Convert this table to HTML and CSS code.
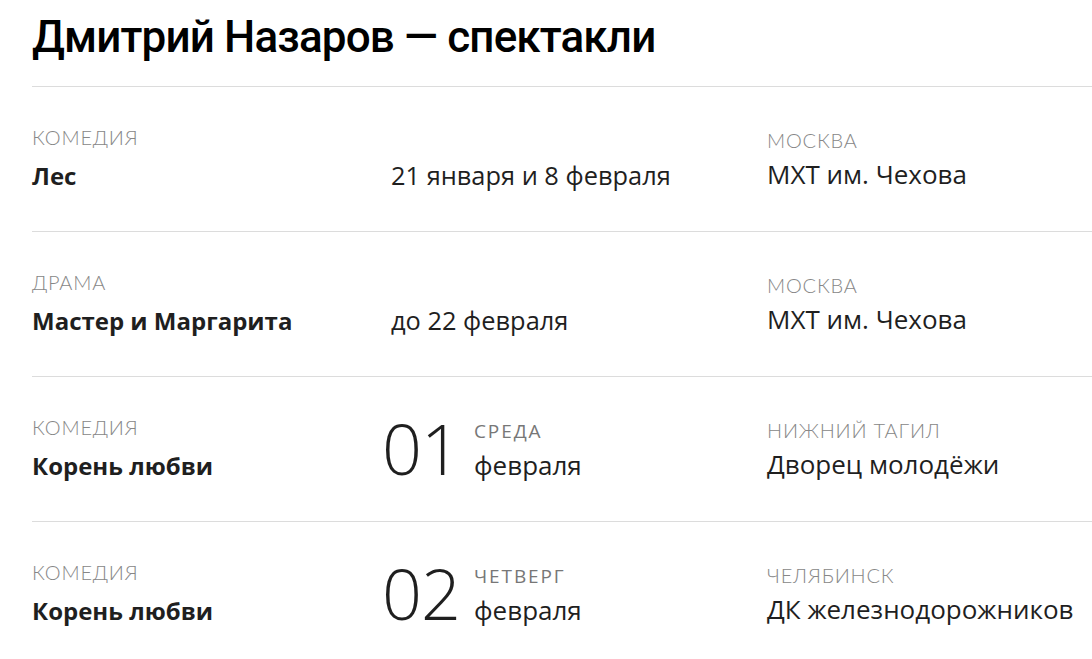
FILE: index.html
```html
<!DOCTYPE html>
<html lang="ru">
<head>
<meta charset="utf-8">
<link rel="stylesheet" href="styles.css">
</head>
<body>
<main class="page">
  <h1 class="title">Дмитрий Назаров — спектакли</h1>
  <ul class="shows">
    <li class="show">
      <div class="col col-name">
        <div class="label">Комедия</div>
        <div class="name">Лес</div>
      </div>
      <div class="col col-date">
        <div class="date-text">21 января и 8 февраля</div>
      </div>
      <div class="col col-place">
        <div class="label">Москва</div>
        <div class="place">МХТ им. Чехова</div>
      </div>
    </li>
    <li class="show">
      <div class="col col-name">
        <div class="label">Драма</div>
        <div class="name">Мастер и Маргарита</div>
      </div>
      <div class="col col-date">
        <div class="date-text">до 22 февраля</div>
      </div>
      <div class="col col-place">
        <div class="label">Москва</div>
        <div class="place">МХТ им. Чехова</div>
      </div>
    </li>
    <li class="show">
      <div class="col col-name">
        <div class="label">Комедия</div>
        <div class="name">Корень любви</div>
      </div>
      <div class="col col-date date-big">
        <div class="day">01</div>
        <div class="day-info">
          <div class="weekday">Среда</div>
          <div class="month">февраля</div>
        </div>
      </div>
      <div class="col col-place">
        <div class="label">Нижний Тагил</div>
        <div class="place">Дворец молодёжи</div>
      </div>
    </li>
    <li class="show">
      <div class="col col-name">
        <div class="label">Комедия</div>
        <div class="name">Корень любви</div>
      </div>
      <div class="col col-date date-big">
        <div class="day">02</div>
        <div class="day-info">
          <div class="weekday">Четверг</div>
          <div class="month">февраля</div>
        </div>
      </div>
      <div class="col col-place">
        <div class="label">Челябинск</div>
        <div class="place">ДК железнодорожников</div>
      </div>
    </li>
  </ul>
</main>
</body>
</html>
```
FILE: styles.css
```css
* { box-sizing: border-box; }
html, body { margin: 0; padding: 0; background: #fff; }
body {
  font-family: "Open Sans", "Noto Sans", sans-serif;
  color: #1f1f1f;
  overflow: hidden;
}
.page {
  padding-left: 32px;
}
.title {
  margin: 0;
  padding-top: 9px;
  height: 86px;
  font-family: "Roboto", "Noto Sans", sans-serif;
  font-weight: 500;
  font-size: 44px;
  line-height: 56px;
  letter-spacing: -0.85px;
  color: #000;
}
.shows {
  list-style: none;
  margin: 0;
  padding: 0;
}
.show {
  display: grid;
  grid-template-columns: 359px 376px 1fr;
  height: 145px;
  border-top: 1px solid #dcdcdc;
  padding-top: 38px;
}
.label {
  font-family: "Lato", sans-serif;
  font-weight: 300;
  font-size: 20px;
  line-height: 24px;
  letter-spacing: 0.8px;
  text-transform: uppercase;
  color: #878787;
}
.name {
  margin-top: 12px;
  font-weight: 700;
  font-size: 24px;
  line-height: 30px;
  color: #1f1f1f;
}
.col-date {
  padding-top: 34px;
}
.date-text, .place, .month {
  font-size: 26px;
  line-height: 32px;
  color: #1f1f1f;
}
.date-text { font-size: 25.4px; }
.col-place .label { margin-top: 3px; }
.place { margin-top: 6px; }
.date-big {
  display: flex;
  padding-top: 0;
  margin-left: -9px;
}
.day {
  font-weight: 300;
  font-size: 70px;
  line-height: 80px;
  letter-spacing: -1px;
  margin-top: -7px;
  width: 92px;
  color: #1f1f1f;
}
.day-info { padding-top: 4px; }
.weekday {
  font-size: 19px;
  line-height: 24px;
  letter-spacing: 1.9px;
  text-transform: uppercase;
  color: #777;
}
.month { margin-top: 6px; }
```
